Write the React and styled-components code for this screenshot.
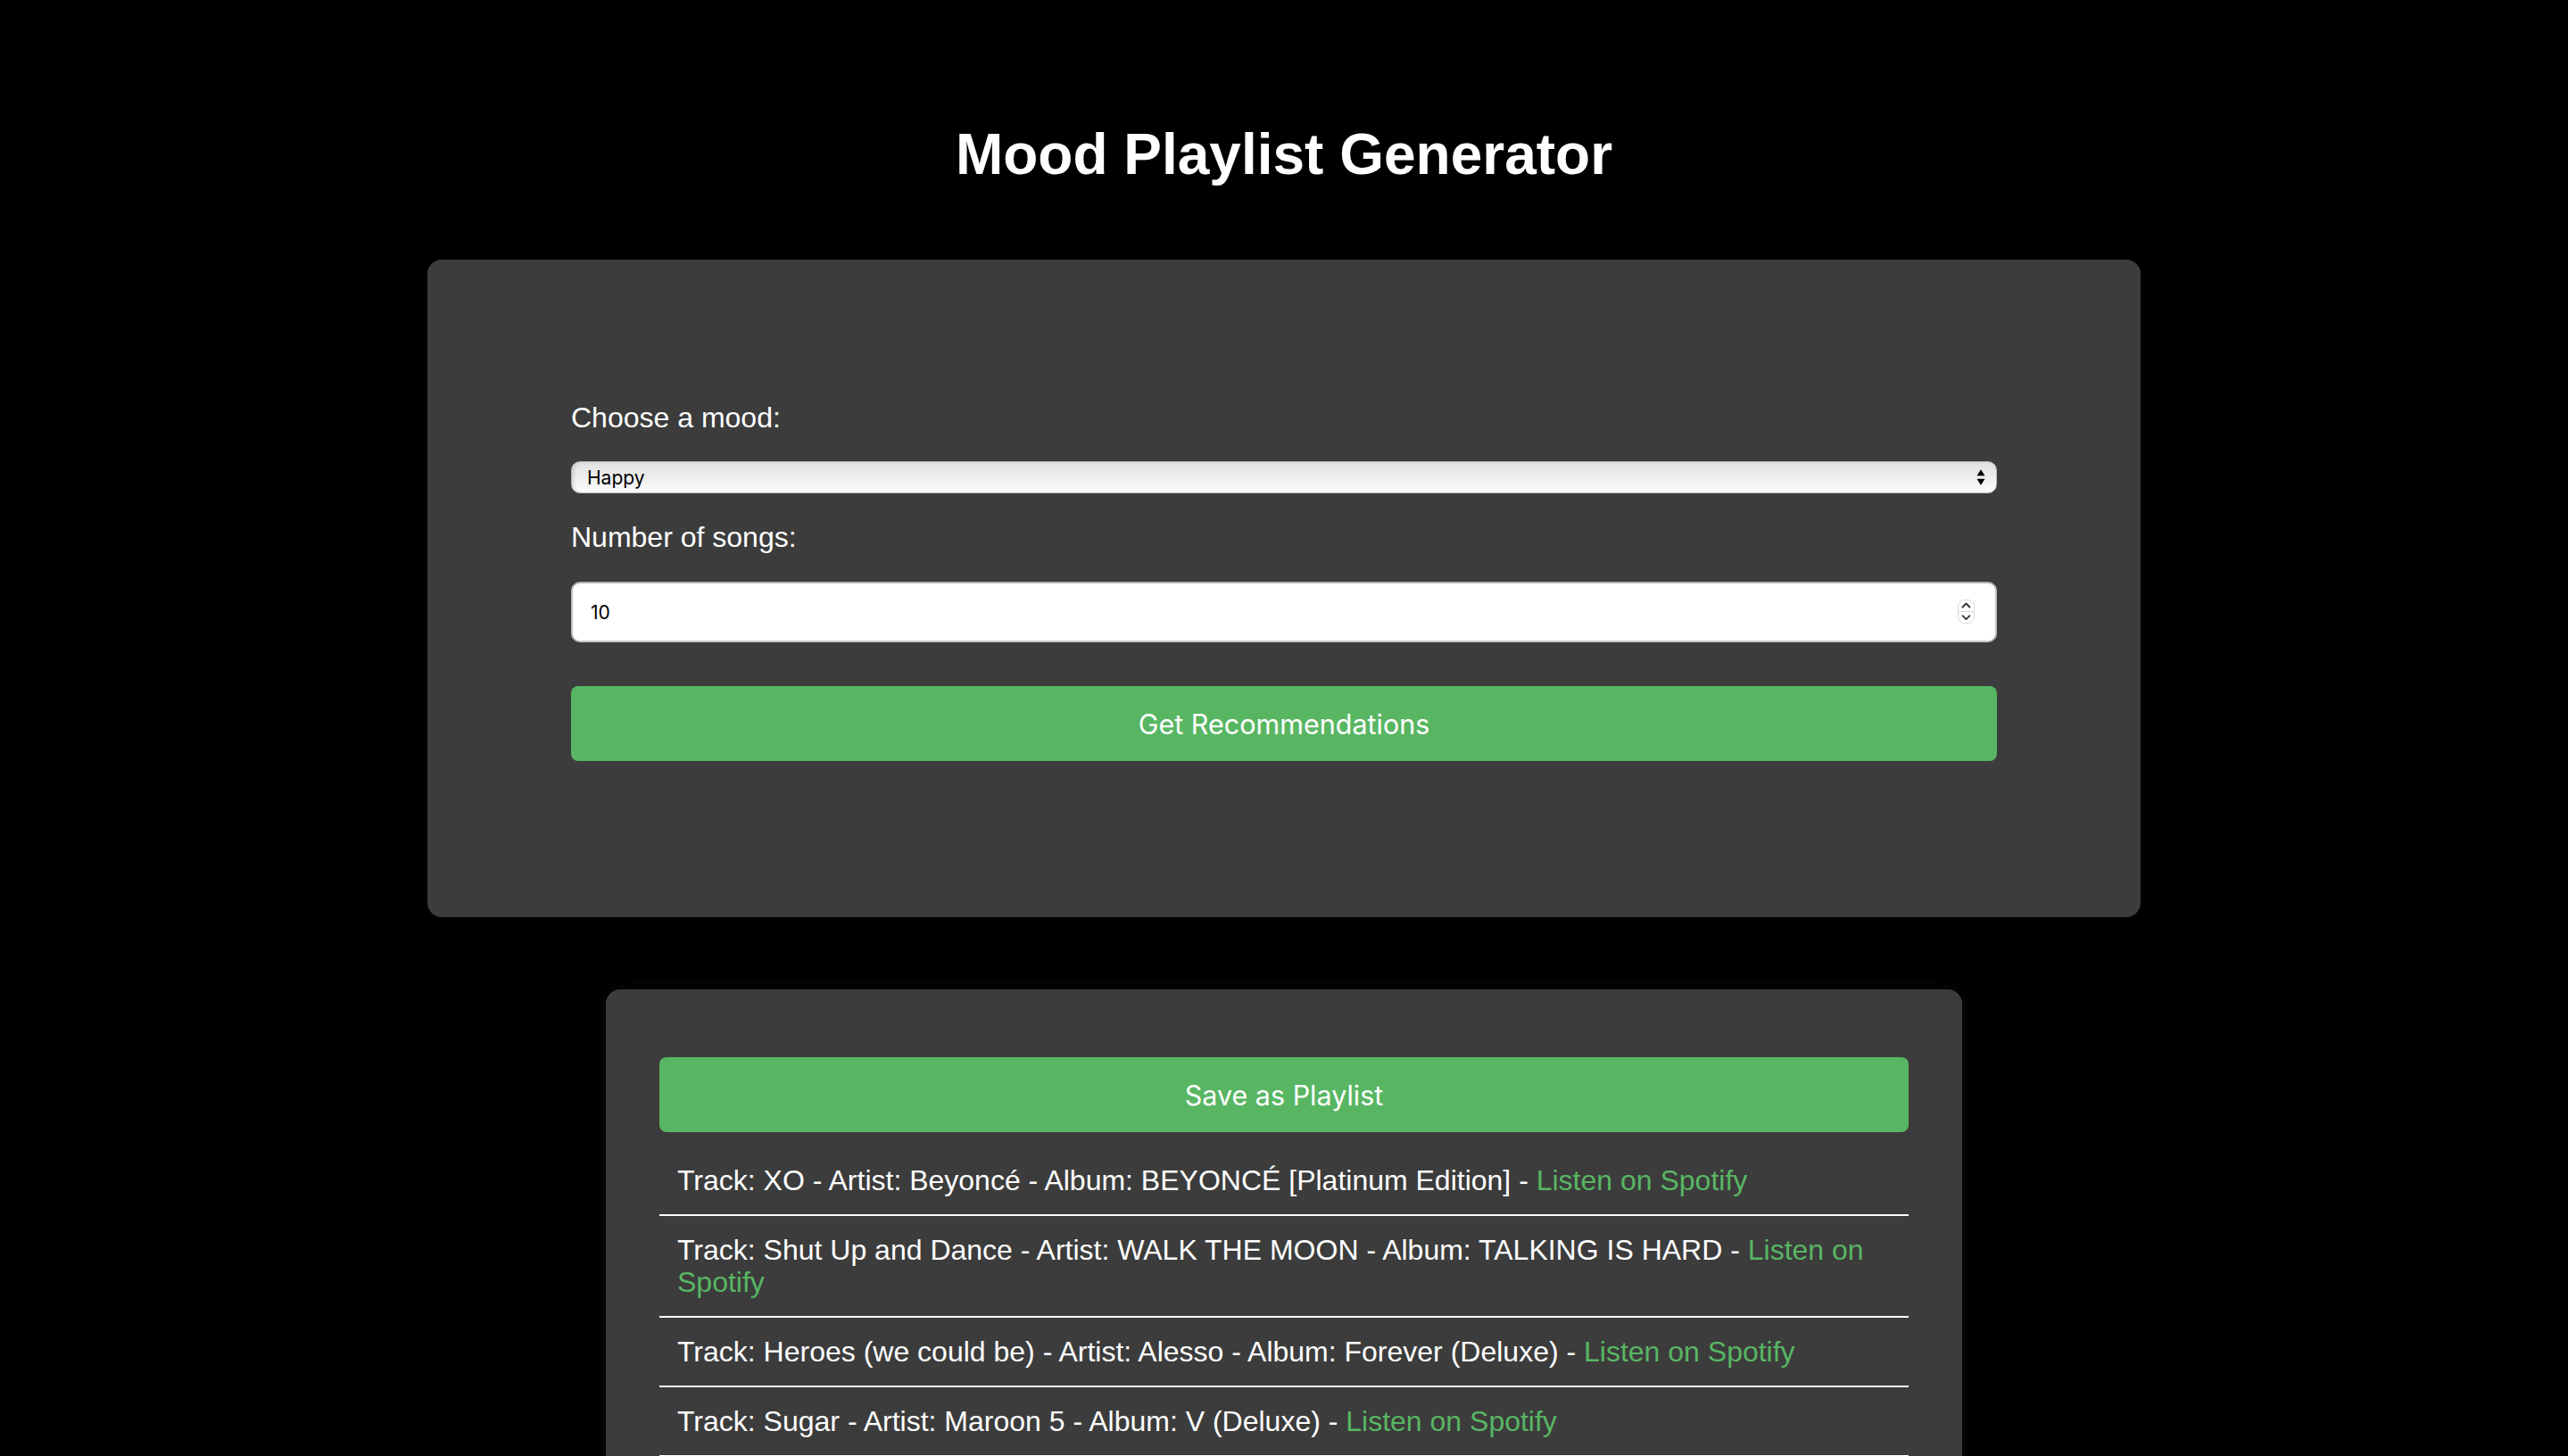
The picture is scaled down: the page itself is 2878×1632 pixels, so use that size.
import React from "react";
import styled, { createGlobalStyle } from "styled-components";

const GlobalStyle = createGlobalStyle`
  html {
    scrollbar-width: none;
  }
  html::-webkit-scrollbar { display: none; }
  html, body {
    margin: 0;
    padding: 0;
    background: #000;
  }
  body {
    font-family: "Liberation Sans", Arial, Helvetica, sans-serif;
    color: #fff;
  }
  *, *::before, *::after { box-sizing: border-box; }
`;

const GREEN = "#58b663";

const Page = styled.main`
  display: flex;
  flex-direction: column;
  align-items: center;
  gap: 81px;
  padding-bottom: 80px;
`;

const Title = styled.h1`
  margin: 136px 0 0;
  font-family: "Liberation Sans", Arial, sans-serif;
  font-size: 64px;
  font-weight: 700;
  line-height: normal;
  color: #fff;
  text-align: center;
`;

const Panel = styled.section`
  width: ${(p) => p.$width}px;
  padding: ${(p) => p.$padding};
  background: #3c3c3c;
  border-radius: 16px;
  box-shadow: ${(p) => (p.$glow ? "0 0 18px rgba(255,255,255,0.05)" : "none")};
`;

const Form = styled.form`
  display: flex;
  flex-direction: column;
`;

const Label = styled.label`
  display: block;
  margin-top: ${(p) => p.$mt || 0}px;
  font-size: 32px;
  line-height: normal;
  color: #fff;
`;

const FieldWrap = styled.div`
  position: relative;
  margin-top: ${(p) => p.$mt}px;
  height: ${(p) => p.$h}px;
`;

const Select = styled.select`
  appearance: none;
  -webkit-appearance: none;
  width: 100%;
  height: 100%;
  margin: 0;
  padding: 0 40px 0 17px;
  border: 1px solid #bdbdbd;
  border-radius: 10px;
  background: linear-gradient(to bottom, #e1e1e1 0%, #ececec 45%, #fdfdfd 100%);
  box-shadow: inset 3px 0 4px -2px rgba(0, 0, 0, 0.18);
  font-family: Inter, "Noto Sans", sans-serif;
  font-size: 21px;
  color: #000;
  outline: none;
`;

const NumberInput = styled.input`
  appearance: textfield;
  -moz-appearance: textfield;
  width: 100%;
  height: 100%;
  margin: 0;
  padding: 0 60px 0 20px;
  border: 2px solid #c4c4c4;
  border-top-color: #b5b5b5;
  border-radius: 10px;
  background: #fff;
  font-family: Inter, "Noto Sans", sans-serif;
  font-size: 21px;
  color: #000;
  outline: none;
  &::-webkit-inner-spin-button,
  &::-webkit-outer-spin-button {
    -webkit-appearance: none;
    margin: 0;
  }
`;

const Overlay = styled.span`
  position: absolute;
  top: ${(p) => p.$top}px;
  right: ${(p) => p.$right}px;
  display: block;
  line-height: 0;
  pointer-events: none;
`;

const ActionButton = styled.button`
  display: block;
  width: 100%;
  height: 84px;
  margin: ${(p) => p.$mt || 0}px 0 ${(p) => p.$mb || 0}px;
  padding: 0;
  border: none;
  border-radius: 8px;
  background: ${GREEN};
  color: #fff;
  font-family: Inter, "Noto Sans", sans-serif;
  font-size: 30.5px;
  font-weight: 400;
  cursor: pointer;
`;

const TrackList = styled.ul`
  list-style: none;
  margin: 0;
  padding: 0;
`;

const TrackItem = styled.li`
  padding: 20px 20px;
  border-bottom: 2px solid #fff;
  font-size: 32px;
  line-height: 36px;
  color: #fff;
`;

const SpotifyLink = styled.a`
  color: ${GREEN};
  text-decoration: none;
`;

const SelectArrows = () => (
  <svg width="10" height="18" viewBox="0 0 10 18">
    <path d="M0.5 7.3 L5 0.3 L9.5 7.3 Z" fill="#000" />
    <path d="M0.5 10.7 L5 17.7 L9.5 10.7 Z" fill="#000" />
  </svg>
);

const Spinner = () => (
  <svg width="19" height="27" viewBox="0 0 19 27">
    <rect x="0.5" y="0.5" width="18" height="26" rx="7" fill="#fff" stroke="#d9d9d9" />
    <line x1="1" y1="13.5" x2="18" y2="13.5" stroke="#d9d9d9" />
    <path d="M5.5 8.5 L9.5 4.5 L13.5 8.5" fill="none" stroke="#333" strokeWidth="1.8" strokeLinecap="round" strokeLinejoin="round" />
    <path d="M5.5 18.2 L9.5 22.2 L13.5 18.2" fill="none" stroke="#333" strokeWidth="1.8" strokeLinecap="round" strokeLinejoin="round" />
  </svg>
);

const tracks = [
  { track: "XO", artist: "Beyoncé", album: "BEYONCÉ [Platinum Edition]" },
  { track: "Shut Up and Dance", artist: "WALK THE MOON", album: "TALKING IS HARD" },
  { track: "Heroes (we could be)", artist: "Alesso", album: "Forever (Deluxe)" },
  { track: "Sugar", artist: "Maroon 5", album: "V (Deluxe)" },
];

export default function App() {
  return (
    <>
      <GlobalStyle />
      <Page>
        <Title>Mood Playlist Generator</Title>

        <Panel $width={1920} $padding="159px 161px 175px">
          <Form onSubmit={(e) => e.preventDefault()}>
            <Label htmlFor="mood">Choose a mood:</Label>
            <FieldWrap $mt={30} $h={36}>
              <Select id="mood" defaultValue="happy">
                <option value="happy">Happy</option>
                <option value="sad">Sad</option>
                <option value="energetic">Energetic</option>
                <option value="calm">Calm</option>
              </Select>
              <Overlay $top={9} $right={13}>
                <SelectArrows />
              </Overlay>
            </FieldWrap>

            <Label htmlFor="count" $mt={31}>Number of songs:</Label>
            <FieldWrap $mt={31} $h={68}>
              <NumberInput id="count" type="number" defaultValue={10} min={1} max={50} />
              <Overlay $top={20} $right={25}>
                <Spinner />
              </Overlay>
            </FieldWrap>

            <ActionButton type="submit" $mt={49}>Get Recommendations</ActionButton>
          </Form>
        </Panel>

        <Panel $width={1520} $padding="76px 60px 40px" $glow>
          <ActionButton type="button" $mb={16}>Save as Playlist</ActionButton>
          <TrackList>
            {tracks.map((t) => (
              <TrackItem key={t.track}>
                Track: {t.track} - Artist: {t.artist} - Album: {t.album} -{" "}
                <SpotifyLink href="#">Listen on Spotify</SpotifyLink>
              </TrackItem>
            ))}
          </TrackList>
        </Panel>
      </Page>
    </>
  );
}
